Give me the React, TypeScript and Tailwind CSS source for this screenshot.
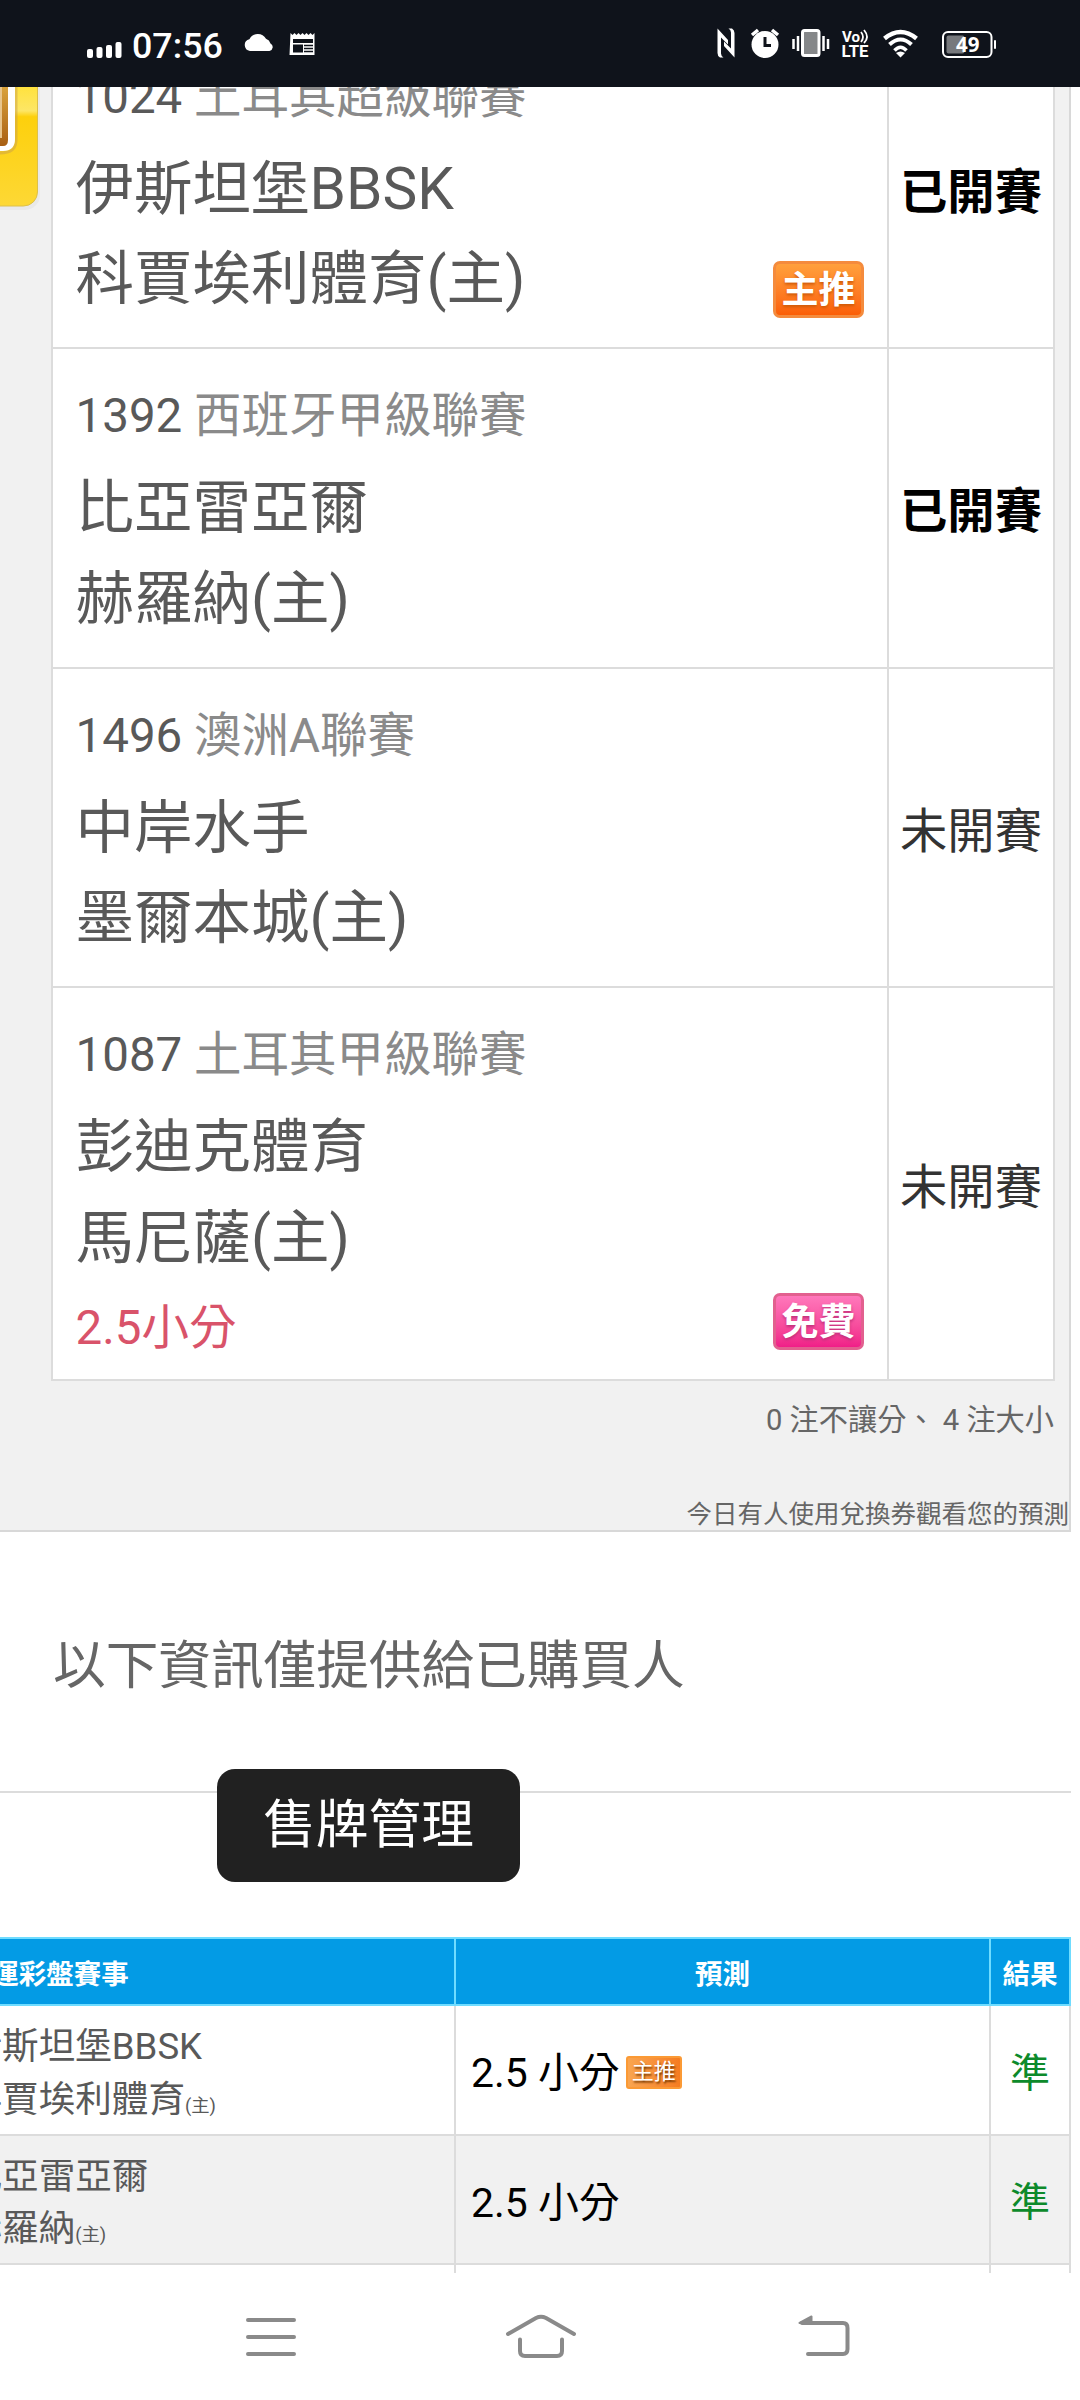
import type { ReactNode } from "react";

interface Match {
  id: string;
  league: string;
  away: string;
  home: string;
  started: boolean;
  badge?: "main" | "free";
  pick?: string;
}

const MATCHES: Match[] = [
  { id: "1024", league: "土耳其超級聯賽", away: "伊斯坦堡BBSK", home: "科賈埃利體育(主)", started: true, badge: "main" },
  { id: "1392", league: "西班牙甲級聯賽", away: "比亞雷亞爾", home: "赫羅納(主)", started: true },
  { id: "1496", league: "澳洲A聯賽", away: "中岸水手", home: "墨爾本城(主)", started: false },
  {
    id: "1087",
    league: "土耳其甲級聯賽",
    away: "彭迪克體育",
    home: "馬尼薩(主)",
    started: false,
    badge: "free",
    pick: "2.5小分",
  },
];

const RESULTS = [
  { away: "伊斯坦堡BBSK", home: "科賈埃利體育", pick: "2.5 小分", main: true },
  { away: "比亞雷亞爾", home: "赫羅納", pick: "2.5 小分", main: false },
];

function StatusBar() {
  return (
    <header className="relative z-10 flex h-[87px] shrink-0 bg-[#0f131b] text-white">
      <svg className="h-[87px] w-[132px] shrink-0" viewBox="0 0 132 87" fill="#fff">
        <rect x="87" y="49" width="6" height="9" rx="2" />
        <rect x="96.500" y="47" width="6" height="11" rx="2" />
        <rect x="106" y="45" width="6" height="13" rx="2" />
        <rect x="115.500" y="42" width="6" height="16" rx="2" />
      </svg>
      <span className="h-[87px] w-[91px] text-[35.800px] leading-[92px] font-medium whitespace-nowrap">07:56</span>
      <svg className="h-[87px] w-[477px] shrink-0" viewBox="223 0 477 87" fill="#fff">
        <path d="M250 51a6 6 0 0 1-.6-11.800a9.500 9.500 0 0 1 16.600-.400a7 7 0 0 1 4.500 4.700a4 4 0 0 1-1 7.500z" />
        <path
          fillRule="evenodd"
          d="M290.500 33l2 2 2-2 2 2 2-2 2 2 2-2 2 2 2-2 2 2 2-2 2 2 2-2v22h-25zM293 39v4h20v-4zM293 44.500v8h10v-8z"
        />
        <path d="M304 45.500h9M304 48.500h9M304 51.500h9" stroke="#0f131b" strokeWidth="1.300" />
      </svg>
      <svg className="h-[87px] w-[380px] shrink-0" viewBox="700 0 380 87" fill="#fff">
        <path d="M717.500 28.500L728 40v4.500L721 37.500v16q0 2.500 2.500 4H720q-2.500-1.500-2.500-4.500z" />
        <path d="M734.500 57.500L724 46v-4.500l7 7v-16q0-2.500-2.500-4h3.500q2.500 1.500 2.500 4.500z" />
        <circle cx="765" cy="44.500" r="13.500" />
        <path d="M752 35l6-5M778 35l-6-5" stroke="#fff" strokeWidth="3.500" />
        <path d="M765 37v8.500h6" fill="none" stroke="#0f131b" strokeWidth="3" />
        <rect x="802.500" y="30.500" width="16.500" height="25" rx="2" fill="#858789" stroke="#fff" strokeWidth="3" />
        <path d="M793.500 39v10M798 36v15M823.500 36v15M828 39v10" stroke="#fff" strokeWidth="2.500" />
        <text x="842" y="42" fontSize="15.500" fontWeight="700" textLength="18" lengthAdjust="spacingAndGlyphs">
          Vo
        </text>
        <path d="M861 32q4 5 0 10M864 30q6 7 0 13" fill="none" stroke="#fff" strokeWidth="1.800" />
        <text x="841.500" y="56.500" fontSize="16" fontWeight="700" textLength="27" lengthAdjust="spacingAndGlyphs">
          LTE
        </text>
        <g fill="none" stroke="#fff" strokeWidth="4.500">
          <path d="M884.500 38.500q16-13 32 0" />
          <path d="M889.500 44.500q11-10 22 0" strokeWidth="4" />
          <path d="M894.500 50.500q6-6.500 12 0" strokeWidth="3.500" />
        </g>
        <path d="M896 53q4.500-3 9 0l-4.500 4.500z" />
        <rect x="943" y="32" width="48.500" height="25" rx="5" fill="none" stroke="#fff" strokeWidth="2" />
        <rect x="946.500" y="35.500" width="18" height="18" rx="2" fill="#77797d" />
        <rect x="994" y="40" width="2" height="9" rx="1" />
        <text x="956" y="52" fontSize="20.500" fontWeight="700" fontFamily="Open Sans, sans-serif">
          49
        </text>
      </svg>
    </header>
  );
}

function Badge({ kind }: { kind: "main" | "free" }) {
  const main = kind === "main";
  return (
    <span
      className={`flex h-[57px] w-[91px] items-center justify-center rounded-[7px] border-[3px] text-[37px] leading-none font-bold text-white ${
        main
          ? "border-[#f48b3d] bg-linear-to-b from-[#ffa03c] to-[#fb5e05] [text-shadow:0_2px_3px_#d05a08]"
          : "border-[#e2608f] bg-linear-to-b from-[#ff77bb] to-[#f01d88] [text-shadow:0_2px_3px_#c0307a]"
      }`}
    >
      <span className="pt-[2px]">{main ? "主推" : "免費"}</span>
    </span>
  );
}

function MatchRow({ match }: { match: Match }) {
  return (
    <div className="flex border-b-2 border-[#dcdcdc]">
      <div className="flex flex-1 items-end justify-between border-r-2 border-[#dcdcdc] pt-[22px] pr-[23px] pb-[22px] pl-[22.500px]">
        <div className="whitespace-nowrap text-[#595959]">
          <div className="h-[91px] text-[47.500px] leading-[91px]">
            {match.id} <span className="text-[#8a8a8a]">{match.league}</span>
          </div>
          <div className="h-[91.500px] text-[58.500px] leading-[92px]">{match.away}</div>
          <div className="h-[91px] text-[58.500px] leading-[91px]">{match.home}</div>
          {match.pick && <div className="h-[73.500px] text-[47.500px] leading-[88px] text-[#d9536a]">{match.pick}</div>}
        </div>
        {match.badge && (
          <div className="mb-[7px]">
            <Badge kind={match.badge} />
          </div>
        )}
      </div>
      <div className="flex w-[164px] items-center justify-center pt-[10px] text-[47.300px] whitespace-nowrap">
        {match.started ? (
          <span className="font-bold text-black">已開賽</span>
        ) : (
          <span className="text-[#333]">未開賽</span>
        )}
      </div>
    </div>
  );
}

function HeadCell({ className, children }: { className: string; children: ReactNode }) {
  return (
    <div className={`flex shrink-0 items-center justify-center border-r-2 border-[#6fdcff] pt-[7px] ${className}`}>
      {children}
    </div>
  );
}

function ResultTable() {
  return (
    <div className="-ml-[334px] w-[1405px]">
      <div className="flex h-[69px] border-y-2 border-[#6fdcff] bg-[#039be5] text-[27.500px] font-bold text-white">
        <HeadCell className="w-[790px]">運彩盤賽事</HeadCell>
        <HeadCell className="w-[535px]">預測</HeadCell>
        <HeadCell className="w-20">結果</HeadCell>
      </div>
      {RESULTS.map((row, i) => (
        <div key={row.away} className={`flex h-[129.500px] border-b-2 border-[#dcdcdc] ${i % 2 ? "bg-[#f1f1f1]" : "bg-white"}`}>
          <div className="flex w-[790px] flex-col justify-center border-r-2 border-[#dcdcdc] pt-[14px] pl-[299.500px] text-[36.600px] leading-[52.700px] text-[#595959]">
            <div>{row.away}</div>
            <div>
              {row.home}
              <span className="text-[18.300px]">(主)</span>
            </div>
          </div>
          <div className="flex w-[535px] items-center border-r-2 border-[#dcdcdc] pl-[15px] text-[40.900px] text-black">
            <span className="pt-[8px]">{row.pick}</span>
            {row.main && (
              <span className="mt-[5px] ml-[6px] flex h-[33px] w-14 items-center justify-center rounded-[3px] border-2 border-[#fb9a35] bg-linear-to-r from-[#f9a550] to-[#f57c1f] text-[22px] leading-none text-white [text-shadow:1px_2px_2px_#7a3a00]">
                主推
              </span>
            )}
          </div>
          <div className="flex w-20 items-center justify-center border-r-2 border-[#dcdcdc] pt-[8px] text-[40px] text-[#0d8a2b]">
            準
          </div>
        </div>
      ))}
      <div className="flex h-[8px]">
        <div className="w-[790px] border-r-2 border-[#dcdcdc]" />
        <div className="w-[535px] border-r-2 border-[#dcdcdc]" />
        <div className="w-20 border-r-2 border-[#dcdcdc]" />
      </div>
    </div>
  );
}

function NavBar() {
  return (
    <nav className="mt-auto h-[127px] shrink-0">
      <svg
        className="h-[127px] w-[1080px]"
        viewBox="0 2273 1080 127"
        fill="none"
        stroke="#8a8a8a"
        strokeWidth="4"
        strokeLinecap="round"
        strokeLinejoin="round"
      >
        <path d="M248 2320h46M248 2337h46M248 2354h46" />
        <path d="M508 2334l28-16q5-2.500 10 0l28 16M520 2339.500v11.500q0 5 5 5h32q5 0 5-5v-11.500" />
        <path d="M802 2323h41q4.500 0 4.500 5v21q0 5-4.500 5h-35" />
        <path d="M799.500 2323l12-6.500v6.500z" fill="#8a8a8a" strokeWidth="2" />
      </svg>
    </nav>
  );
}

export default function App() {
  return (
    <div className="flex h-[2400px] w-[1080px] flex-col overflow-hidden bg-white font-[Roboto,'Noto_Sans_CJK_TC',sans-serif]">
      <StatusBar />
      <section className="relative h-[1445px] w-[1071px] shrink-0 border-r-2 border-b-2 border-[#d8d8d8] bg-[#f1f1f1]">
        <svg className="absolute top-0 left-0 h-[126px] w-[46px]" viewBox="0 87 46 126">
          <defs>
            <linearGradient id="gold" x1="0" y1="87" x2="0" y2="206" gradientUnits="userSpaceOnUse">
              <stop offset="0" stopColor="#ffe23e" />
              <stop offset="0.200" stopColor="#fde666" />
              <stop offset="0.250" stopColor="#fdd00c" />
              <stop offset="1" stopColor="#fdd835" />
            </linearGradient>
            <linearGradient id="bronze" x1="0" y1="87" x2="0" y2="146" gradientUnits="userSpaceOnUse">
              <stop offset="0" stopColor="#d9a23c" />
              <stop offset="1" stopColor="#a85f12" />
            </linearGradient>
          </defs>
          <rect x="-40" y="40" width="80" height="170" rx="15" fill="#e9e9e9" />
          <rect x="-40" y="40" width="77.500" height="166" rx="14" fill="url(#gold)" stroke="#dcc04a" />
          <path d="M0 153q16 0 16-13V87" fill="none" stroke="#caa04a" strokeOpacity="0.500" strokeWidth="3" />
          <path d="M0 87h15v52q0 12-12 12H0z" fill="#fff" />
          <path d="M0 87h8v53q0 6-5 6H0z" fill="url(#bronze)" />
          <path d="M0 87h2v51H0z" fill="#e8c58c" />
        </svg>
        <div className="-mt-[57.500px] ml-[51px] w-[1004px] border-r-2 border-l-2 border-[#dcdcdc] bg-white">
          {MATCHES.map((match) => (
            <MatchRow key={match.id} match={match} />
          ))}
        </div>
        <p className="mt-[16.500px] mr-[15px] text-right text-[29.200px] leading-[44px] text-[#666]">
          0 注不讓分、 4 注大小
        </p>
        <p className="mt-[52px] text-right text-[25.500px] leading-[40px] text-[#666]">今日有人使用兌換券觀看您的預測</p>
      </section>
      <p className="mt-[94px] ml-[53px] h-[80px] shrink-0 text-[52.650px] leading-[80px] text-[#666]">
        以下資訊僅提供給已購買人
      </p>
      <div className="mt-[85px] h-[146px] w-[1071px] shrink-0 border-t-2 border-[#dcdcdc]">
        <button className="-mt-[24px] ml-[217px] flex h-[113px] w-[303px] items-center justify-center rounded-[18px] bg-[#212121] text-[52.650px] text-white">
          售牌管理
        </button>
      </div>
      <ResultTable />
      <NavBar />
    </div>
  );
}
